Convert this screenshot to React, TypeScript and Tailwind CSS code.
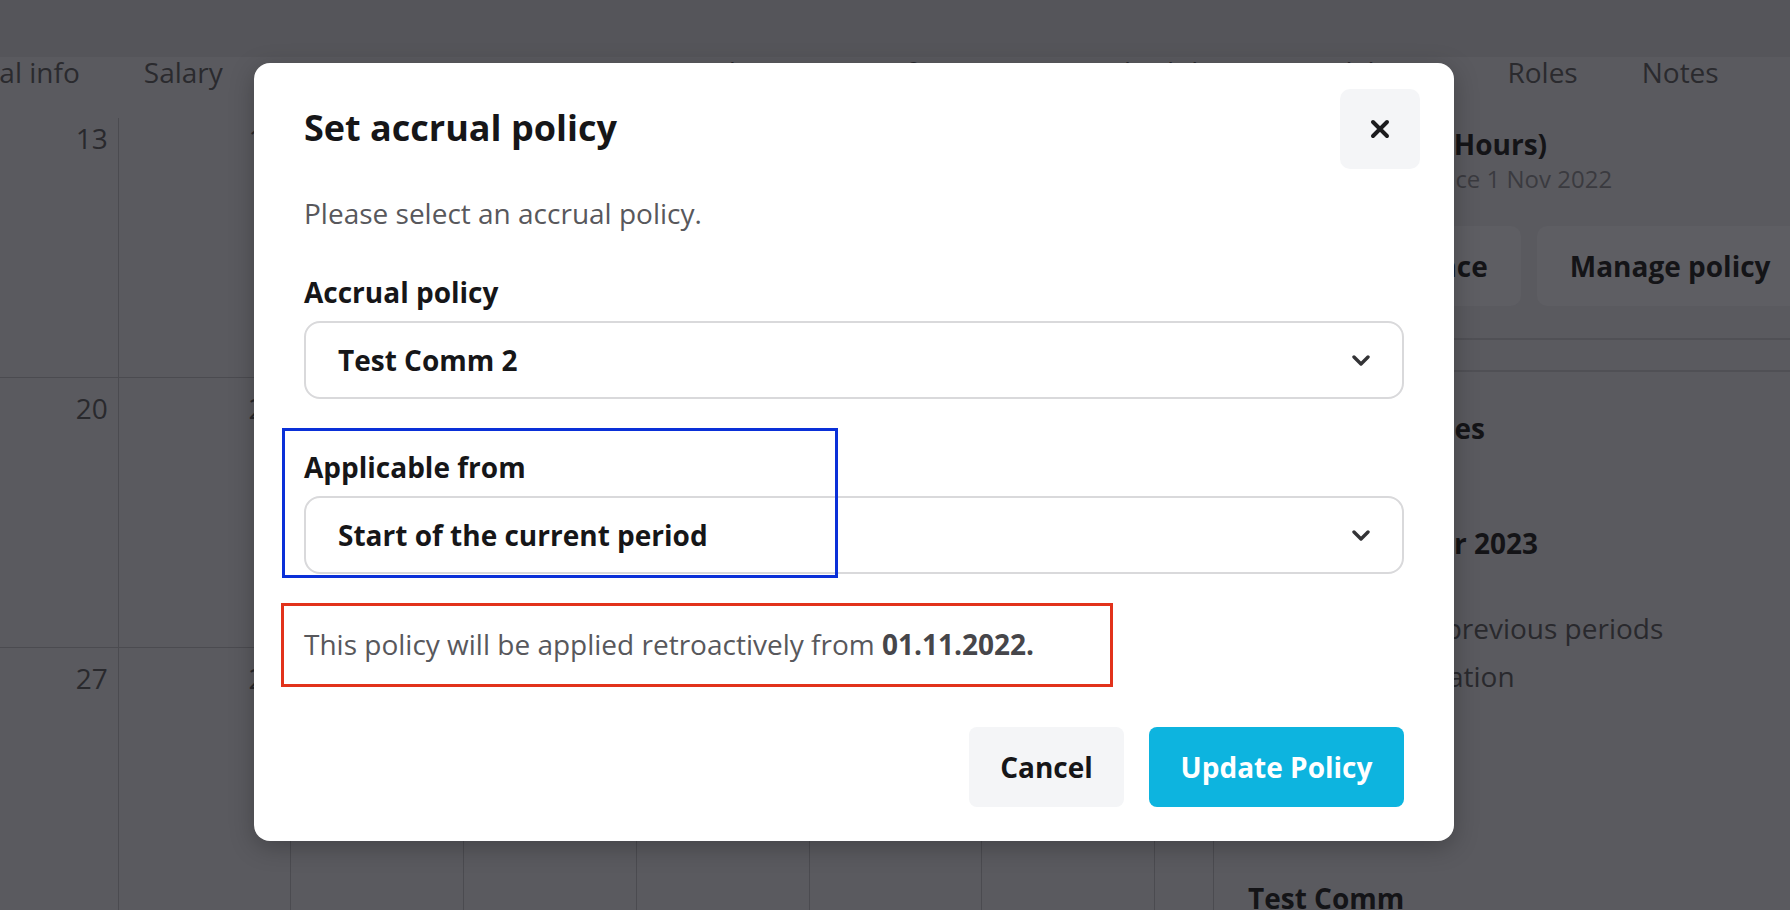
import React from "react"

const tabs = [
  "Personal info",
  "Salary",
  "Documents",
  "Assets",
  "Attendance",
  "Performance",
  "Schedules",
  "Work hours",
  "Roles",
  "Notes",
]

const weeks = [
  [13, 14, 15, 16, 17, 18, 19],
  [20, 21, 22, 23, 24, 25, 26],
  [27, 28, 29, 30, 31, 1, 2],
]

function CloseIcon() {
  return (
    <svg width="20" height="20" viewBox="0 0 20 20" fill="none">
      <path d="M3 3l14 14M17 3L3 17" stroke="#1c1c1e" strokeWidth="4" strokeLinecap="round" />
    </svg>
  )
}

function Chevron() {
  return (
    <svg width="18" height="11" viewBox="0 0 18 11" fill="none">
      <path d="M2 2l7 7 7-7" stroke="#333336" strokeWidth="3.4" strokeLinecap="round" strokeLinejoin="round" />
    </svg>
  )
}

function SelectBox({ value }: { value: string }) {
  return (
    <button className="flex h-[78px] w-full items-center justify-between rounded-[16px] border-2 border-[#d9d9db] bg-white pl-[32px] pr-[32px] text-left">
      <span className="text-[28px] font-bold leading-[40px] text-[#161618]">{value}</span>
      <Chevron />
    </button>
  )
}

function Calendar() {
  return (
    <div className="-ml-[55px] grid w-[1210px] shrink-0 grid-cols-7 border-r border-[#4b4b50]">
      {weeks.map((week, w) =>
        week.map((day, d) => (
          <div
            key={`${w}-${d}`}
            className={`border-b border-l border-[#4b4b50] pr-[10px] text-right text-[28px] leading-[40px] text-[#29292d] ${
              w === 0 ? "h-[260px]" : "h-[270px] pt-[10px]"
            }`}
          >
            {day}
          </div>
        ))
      )}
    </div>
  )
}

function SidePanel() {
  return (
    <div className="ml-[58px] w-[600px] shrink-0 border-l border-[#4b4b50] pl-[34px] pt-[6px] text-[#141417]">
      <h3 className="text-[28px] font-bold leading-[40px]">Annual Leave (Hours)</h3>
      <p className="mt-[-2px] text-[24px] leading-[34px] text-[#3a3a3f]">Policy assigned since 1 Nov 2022</p>
      <div className="mt-[30px] flex gap-[16px]">
        <button className="h-[80px] rounded-[10px] bg-[#5e5e63] px-[33px] text-[28px] font-bold">Adjust balance</button>
        <button className="h-[80px] rounded-[10px] bg-[#5e5e63] px-[33px] text-[28px] font-bold">Manage policy</button>
      </div>
      <div className="-ml-[34px] mt-[32px] h-[34px] border-y-2 border-[#505055]" />
      <h4 className="mt-[36px] text-[28px] font-bold leading-[40px]">Assigned policies</h4>
      <h4 className="mt-[75px] text-[28px] font-bold leading-[40px]">Until December 2023</h4>
      <p className="mt-[45px] text-[28px] leading-[40px] text-[#29292d]">Also applies to previous periods</p>
      <p className="mt-[8px] text-[28px] leading-[40px] text-[#29292d]">Annual recalculation</p>
      <h4 className="mt-[182px] text-[28px] font-bold leading-[40px]">Test Comm</h4>
    </div>
  )
}

function AccrualPolicyDialog() {
  return (
    <div className="relative w-[1200px] rounded-[16px] bg-white px-[50px] pb-[34px] pt-[41px] shadow-[0_6px_24px_rgba(0,0,0,0.25)]">
      <button className="absolute right-[34px] top-[26px] flex h-[80px] w-[80px] items-center justify-center rounded-[10px] bg-[#f4f5f7]">
        <CloseIcon />
      </button>

      <h2 className="text-[36px] font-bold leading-[48px] text-[#161618]">Set accrual policy</h2>
      <p className="mt-[41px] text-[28px] leading-[40px] text-[#58585c]">Please select an accrual policy.</p>

      <label className="mt-[39px] block text-[28px] font-bold leading-[40px] text-[#161618]">Accrual policy</label>
      <div className="mt-[9px]">
        <SelectBox value="Test Comm 2" />
      </div>

      <label className="mt-[48px] block text-[28px] font-bold leading-[40px] text-[#161618]">Applicable from</label>
      <div className="mt-[9px]">
        <SelectBox value="Start of the current period" />
      </div>

      <p className="mt-[50px] text-[28px] leading-[40px] text-[#58585c]">
        This policy will be applied retroactively from <span className="font-bold text-[#46464a]">01.11.2022.</span>
      </p>

      <div className="mt-[63px] flex justify-end gap-[25px]">
        <button className="h-[80px] w-[155px] rounded-[8px] bg-[#f4f5f7] text-[28px] font-bold text-[#161618]">Cancel</button>
        <button className="h-[80px] w-[255px] rounded-[8px] bg-[#0db4df] text-[28px] font-bold text-white">Update Policy</button>
      </div>

      {/* review markers */}
      <div className="pointer-events-none absolute left-[28px] top-[365px] h-[150px] w-[556px] border-[3px] border-[#0a30d8]" />
      <div className="pointer-events-none absolute left-[27px] top-[540px] h-[84px] w-[832px] border-[3px] border-[#e2321b]" />
    </div>
  )
}

export default function App() {
  return (
    <div className="relative h-[910px] w-[1790px] overflow-hidden bg-[#5a5a5f] font-['Open_Sans',sans-serif]">
      <div className="h-[57px] bg-[#55555a]" />
      <nav className="-ml-[92px] flex h-[61px] items-start gap-[64px] whitespace-nowrap">
        {tabs.map((t) => (
          <span key={t} className="text-[28px] leading-[30px] text-[#2a2a2e]">
            {t}
          </span>
        ))}
      </nav>
      <div className="flex">
        <Calendar />
        <SidePanel />
      </div>

      <div className="absolute inset-0 pl-[254px] pt-[63px]">
        <AccrualPolicyDialog />
      </div>
    </div>
  )
}
